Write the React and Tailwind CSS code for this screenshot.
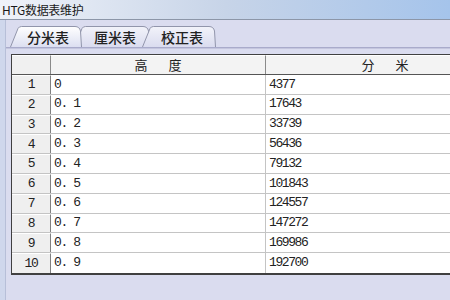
import React from 'react';

const rows = [
  ['0', '4377'],
  ['0.1', '17643'],
  ['0.2', '33739'],
  ['0.3', '56436'],
  ['0.4', '79132'],
  ['0.5', '101843'],
  ['0.6', '124557'],
  ['0.7', '147272'],
  ['0.8', '169986'],
  ['0.9', '192700'],
];

const tabs = [
  { label: '分米表', width: 72, active: true },
  { label: '厘米表', width: 76, active: false },
  { label: '校正表', width: 74, active: false },
];

const TabShape = ({ width, active }) => {
  const w = width;
  const h = 21;
  const id = active ? 'tabActive' : 'tabIdle';
  return (
    <svg className="absolute inset-0" width={w} height={h} viewBox={`0 0 ${w} ${h}`}>
      <defs>
        <linearGradient id={id} x1="0" y1="0" x2="0" y2="1">
          <stop offset="0" stopColor={active ? '#ffffff' : '#f2f3fa'} />
          <stop offset="1" stopColor={active ? '#dcdff1' : '#dadcef'} />
        </linearGradient>
      </defs>
      <path
        d={`M0.5,${h} L8,2.5 Q9,0.5 11.5,0.5 L${w - 7},0.5 Q${w - 2.5},0.5 ${w - 1.5},5 L${w - 0.5},${h}`}
        fill={`url(#${id})`}
        stroke="#9195ab"
        strokeWidth="1"
      />
    </svg>
  );
};

const App = () => {
  const mono = { fontFamily: '"Liberation Mono", "DejaVu Sans Mono", monospace' };
  const cjk = { fontFamily: '"Noto Sans CJK SC", "Noto Sans", sans-serif' };

  return (
    <div className="w-[450px] h-[300px] overflow-hidden flex flex-col bg-[#dadcef]" style={cjk}>
      {/* title bar */}
      <div className="h-[20px] shrink-0 flex items-center pl-[2px] bg-gradient-to-r from-[#f0f3f9] via-[#c7d4e8] via-50% to-[#a5c4eb] border-b border-[#8c96a8]">
        <span className="text-[12px] leading-none text-[#1a1a1a] tracking-[-0.3px]">HTG数据表维护</span>
      </div>

      <div className="flex flex-1 min-h-0">
        <div className="w-[6px] shrink-0 bg-[#cfd7ec] border-r border-[#b7bfd8]" />
        <div className="flex-1 flex flex-col min-w-0 overflow-hidden">
          {/* tabs */}
          <div className="h-[27px] shrink-0 flex items-end pl-[4px] pt-[6px]">
            {tabs.map((t, i) => (
              <div
                key={t.label}
                className={`relative h-[21px] flex items-center justify-center ${t.active ? 'z-10' : i === 1 ? 'z-0 -ml-[8px]' : 'z-[1] -ml-[8px]'}`}
                style={{ width: t.width }}
              >
                <TabShape width={t.width} active={t.active} />
                <span className={`relative text-[14px] leading-none text-[#222] font-medium ${t.active ? 'pl-[4px]' : 'pl-[6px]'}`}>{t.label}</span>
              </div>
            ))}
          </div>
          {/* panel top border */}
          <div className="h-[2px] shrink-0 bg-[#a9abcb] border-b border-[#c4c6de]" />
          <div className="pt-[5px] pl-[5px]">
            <div className="border-t border-l border-b-2 border-[#404040] bg-white w-[500px]">
              {/* header */}
              <div className="flex h-[20px] border-b border-[#555]">
                <div className="w-[39px] shrink-0 bg-[#f0f0f0] border-r border-[#8a8a8a] border-t border-t-white" />
                <div className="w-[215px] shrink-0 bg-[#f3f3f3] border-r border-[#8a8a8a] flex items-center justify-center text-[13px] text-[#222] tracking-[4px] pl-[4px] border-t border-t-white">
                  高　度
                </div>
                <div className="w-[238px] shrink-0 bg-[#f3f3f3] flex items-center justify-center text-[13px] text-[#222] tracking-[4px] pl-[4px] border-t border-t-white">
                  分　米
                </div>
              </div>
              {rows.map(([h, v], i) => (
                <div key={i} className="flex h-[19.8px] border-b border-[#c4c4c4] last:border-b-0">
                  <div
                    className="w-[39px] shrink-0 bg-[#efefef] border-r border-[#808080] border-t border-t-white flex items-center justify-center text-[13px] text-[#222] tracking-[-1.4px]"
                    style={mono}
                  >
                    {i + 1}
                  </div>
                  <div
                    className="w-[215px] shrink-0 border-r border-[#c4c4c4] flex items-center pl-[3px] text-[13px] text-[#222] tracking-[-1.4px]"
                    style={mono}
                  >
                    {h.replace('.', '. ')}
                  </div>
                  <div
                    className="w-[238px] shrink-0 flex items-center pl-[3px] text-[13px] text-[#222] tracking-[-1.4px]"
                    style={mono}
                  >
                    {v}
                  </div>
                </div>
              ))}
            </div>
          </div>
        </div>
      </div>
    </div>
  );
};

export default App;
